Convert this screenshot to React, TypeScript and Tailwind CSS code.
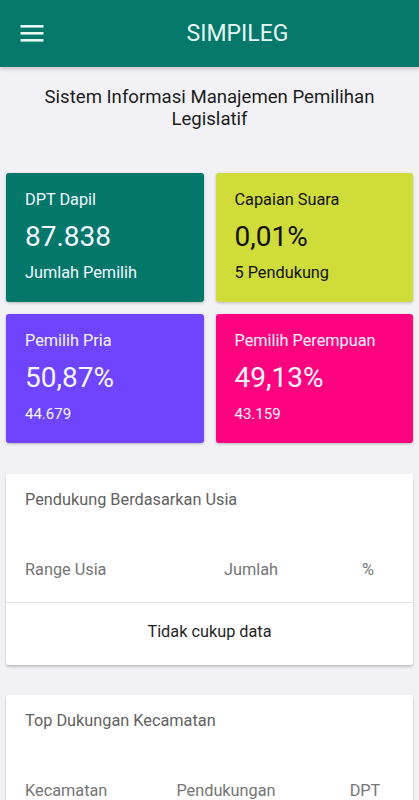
import React from 'react';

const font = { fontFamily: 'Roboto, "Noto Sans", sans-serif' };

const MenuIcon: React.FC = () => (
  <svg width="24" height="18" viewBox="0 0 24 18" className="block">
    <rect x="0.5" y="0" width="23" height="2.6" fill="#e6f6f3" />
    <rect x="0.5" y="7" width="23" height="2.6" fill="#e6f6f3" />
    <rect x="0.5" y="14" width="23" height="2.6" fill="#e6f6f3" />
  </svg>
);

type StatProps = {
  label: string;
  value: string;
  foot: string;
  bg: string;
  dark?: boolean;
  small?: boolean;
};

const StatCard: React.FC<StatProps> = ({ label, value, foot, bg, dark, small }) => (
  <div className={`${bg} h-[129px] rounded-[3px] pl-[19px] pt-[15px] shadow-[0_1px_3px_rgba(0,0,0,0.25)] ${dark ? 'text-[#111]' : 'text-[#f3f7ff]'}`}>
    <div className="text-[16.3px] leading-[24px]">{label}</div>
    <div className="mt-[7px] text-[28px] leading-[36px]">{value}</div>
    <div className={`mt-[6px] leading-[24px] ${small ? 'text-[15px]' : 'text-[16.3px]'}`}>{foot}</div>
  </div>
);

type TableCardProps = {
  title: string;
  cols: string;
  heads: string[];
  children?: React.ReactNode;
};

const TableCard: React.FC<TableCardProps> = ({ title, cols, heads, children }) => (
  <div className="mx-[6px] rounded-[3px] bg-white shadow-[0_2px_3px_rgba(0,0,0,0.2)]">
    <div className="px-[19px] pt-[14px] text-[16.3px] leading-[24px] text-[#616161]">{title}</div>
    <div className={`grid ${cols} px-[19px] pt-[46px] pb-[20px] text-[16.3px] leading-[24px] text-[#757575]`}>
      <div>{heads[0]}</div>
      <div className="text-center">{heads[1]}</div>
      <div className="text-center">{heads[2]}</div>
    </div>
    {children}
  </div>
);

export default function App() {
  return (
    <div className="min-h-[800px] bg-[#f2f2f6]" style={font}>
      <header className="flex h-[67px] items-center bg-[#04786a] shadow-[0_2px_4px_rgba(0,0,0,0.2)]">
        <div className="w-14 pl-5">
          <MenuIcon />
        </div>
        <h1 className="flex-1 text-center text-[23px] leading-[30px] text-[#e6f6f3]">SIMPILEG</h1>
      </header>

      <p className="mx-auto mt-[19px] w-[360px] text-center text-[18.6px] leading-[22px] text-[#1c1c1c]">
        Sistem Informasi Manajemen Pemilihan Legislatif
      </p>

      <div className="mt-[43px] grid grid-cols-2 gap-x-[12px] gap-y-[12px] px-[6px]">
        <StatCard label="DPT Dapil" value="87.838" foot="Jumlah Pemilih" bg="bg-[#03776a]" />
        <StatCard label="Capaian Suara" value="0,01%" foot="5 Pendukung" bg="bg-[#cfdc39]" dark />
        <StatCard label="Pemilih Pria" value="50,87%" foot="44.679" bg="bg-[#6f44fe]" small />
        <StatCard label="Pemilih Perempuan" value="49,13%" foot="43.159" bg="bg-[#fe037f]" small />
      </div>

      <div className="mt-[31px]">
        <TableCard
          title="Pendukung Berdasarkan Usia"
          cols="grid-cols-[135px_182px_1fr]"
          heads={['Range Usia', 'Jumlah', '%']}
        >
          <div className="border-t border-[#e0e0e0] pt-[17px] pb-[21px] text-center text-[16.3px] leading-[24px] text-[#1f1f1f]">
            Tidak cukup data
          </div>
        </TableCard>
      </div>

      <div className="mt-[30px] pb-6">
        <TableCard
          title="Top Dukungan Kecamatan"
          cols="grid-cols-[91px_220px_1fr]"
          heads={['Kecamatan', 'Pendukungan', 'DPT']}
        >
          <div className="h-[40px]" />
        </TableCard>
      </div>
    </div>
  );
}
